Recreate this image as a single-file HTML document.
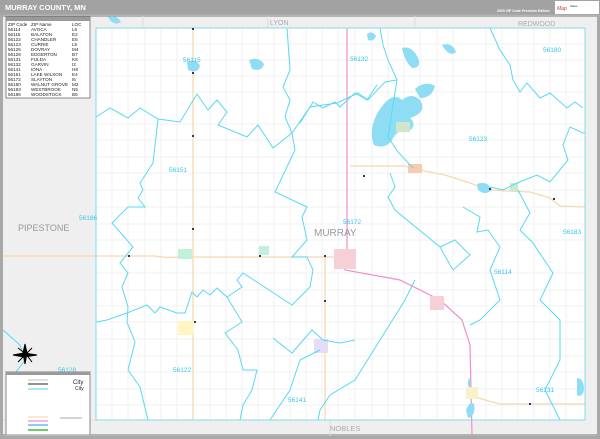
<!DOCTYPE html>
<html><head><meta charset="utf-8"><style>
body{margin:0;width:600px;height:439px;overflow:hidden;background:#fff;font-family:"Liberation Sans",sans-serif}
svg{display:block}
text{font-family:"Liberation Sans",sans-serif}
</style></head><body>
<svg width="600" height="439" viewBox="0 0 600 439" xmlns="http://www.w3.org/2000/svg">
<rect width="600" height="439" fill="#a9a9a9"/>
<rect x="0" y="0" width="600" height="14" fill="#a2a2a2"/>
<text x="5" y="10" font-size="7.5" font-weight="bold" fill="#fff">MURRAY COUNTY, MN</text>
<text x="497" y="12" font-size="3.5" font-weight="bold" fill="#fff">2020 ZIP Code Premium Edition</text>
<rect x="555" y="1" width="44" height="13" fill="#fff"/>
<text x="557" y="10" font-size="5" fill="#c33" font-style="italic">Map</text>
<text x="570" y="7" font-size="3" fill="#333">Sales</text>
<!-- map frame -->
<rect x="3" y="15" width="594" height="421" fill="#efefef"/>
<rect x="96" y="28" width="489" height="392" fill="#fff"/>
<!-- ticks -->
<g fill="#666" font-size="2">
<line x1="3" y1="16" x2="597" y2="16" stroke="#777" stroke-width="1"/>
<line x1="3" y1="435" x2="597" y2="435" stroke="#777" stroke-width="1"/>
</g>
<!-- neighbor borders -->
<g stroke="#ddd" stroke-width="1" fill="none">
<path d="M143 16V28M268 16V28M415 16V28M330 420V436M3 420H96"/>
</g>
<text x="270" y="25" font-size="7" fill="#aaa">LYON</text>
<text x="518" y="26" font-size="7" fill="#aaa">REDWOOD</text>
<text x="330" y="431" font-size="7.5" fill="#aaa">NOBLES</text>
<text x="18" y="231" font-size="9" fill="#999">PIPESTONE</text>
<!-- grid -->
<g stroke="#eeeeee" stroke-width="0.8">
<path d="M96 44H585M96 60H585M96 76H585M96 92H585M96 124H585M96 140H585M96 157H585M96 173H585M96 190H585M96 207H585M96 224H585M96 240H585M96 273H585M96 290H585M96 306H585M96 322H585M96 339H585M96 356H585M96 372H585M96 389H585M96 405H585"/>
<path d="M112 28V420M128 28V420M145 28V420M161 28V420M177 28V420M210 28V420M226 28V420M242 28V420M258 28V420M274 28V420M290 28V420M306 28V420M322 28V420M338 28V420M355 28V420M372 28V420M388 28V420M404 28V420M420 28V420M437 28V420M453 28V420M486 28V420M502 28V420M518 28V420M534 28V420M550 28V420M566 28V420"/>
</g>
<!-- roads -->
<g fill="none" stroke="#f8d8b0" stroke-width="1.3">
<path d="M193 28V420"/>
<path d="M3 256H155Q165 258 180 257H335"/>
<path d="M350 166L404 166L420 170L445 175L470 183L488 190L530 192L550 198L560 206L585 207"/>
<path d="M470 395L485 400L500 404H585"/>
<path d="M325 256V420"/>
</g>
<path d="M347 28V250L340 260L345 270L400 280L440 300L462 320L470 345L472 435" fill="none" stroke="#f08fc8" stroke-width="1.2"/>
<!-- lakes -->
<g fill="#8fdcf5">
<path d="M378 112Q392 90 402 100Q412 92 420 100Q428 112 410 118Q418 125 408 132Q398 128 392 140Q385 150 374 145Q368 130 378 112Z"/>
<path d="M402 48Q412 45 418 58Q422 68 412 68Q405 62 402 48Z"/>
<path d="M442 45Q452 42 456 52Q450 58 442 45Z"/>
<path d="M415 89Q425 80 435 86Q432 98 420 98Z"/>
<path d="M187 62Q197 58 200 66Q198 74 188 70Z"/>
<path d="M249 60Q258 56 264 64Q262 72 252 69Z"/>
<path d="M367 34Q372 30 376 36Q374 42 368 40Z"/>
<path d="M477 184Q487 180 492 190Q485 196 478 190Z"/>
<path d="M466 410Q470 400 474 404Q476 416 468 418Z"/>
<path d="M469 378Q472 382 470 388Q466 385 469 378Z"/>
<path d="M577 378Q584 378 584 390Q582 398 577 395Z"/>
<path d="M108 17Q116 14 121 22Q114 27 108 17Z"/>
</g>
<!-- towns -->
<rect x="396" y="122" width="14" height="10" fill="#cfe6cc"/>
<rect x="408" y="164" width="14" height="9" fill="#f4ccb0"/>
<rect x="510" y="183" width="8" height="8" fill="#c7ecd6"/>
<rect x="334" y="249" width="22" height="20" fill="#f5d0d6"/>
<rect x="430" y="296" width="14" height="14" fill="#f5d0d6"/>
<rect x="178" y="249" width="14" height="10" fill="#c3f0dc"/>
<rect x="259" y="246" width="10" height="9" fill="#c3f0dc"/>
<rect x="178" y="321" width="16" height="14" fill="#fff6c4"/>
<rect x="314" y="339" width="14" height="14" fill="#e5dcf7"/>
<rect x="466" y="387" width="12" height="12" fill="#f6f3c8"/>
<!-- zip boundaries -->
<g fill="none" stroke="#5ad8f2" stroke-width="1">
<path d="M96 117L110 108L128 118L140 108L158 119L180 122L197 94L208 110L217 100L227 112L218 125L247 137L258 125L273 148L292 133L310 107L337 103L358 93L368 100L385 82L397 80"/>
<path d="M287 28L290 70L283 87L290 100L285 117L292 133L295 150L275 192L307 207L302 217L307 240L292 257L307 257L313 270L310 287L292 305L243 273L237 280L242 287L227 297L217 288L210 295L203 290L197 297L192 292L185 313L177 313L160 307L155 313L147 305L127 313L107 320L96 322"/>
<path d="M158 119L153 163L140 183L143 190L138 198L145 207L128 207L112 223L133 247L120 263L128 273L122 287L128 307L127 322L135 342L128 370L140 387L148 420"/>
<path d="M227 297L242 322L225 333L238 350L243 370L257 370L252 390L243 405L240 420"/>
<path d="M273 338L292 353L312 330L323 340L340 343L355 340"/>
<path d="M415 280L405 300L355 380L330 395L320 410L318 420"/>
<path d="M380 28L383 45L388 60L397 80L388 137L398 152L413 168"/>
<path d="M300 123L313 102L323 108L335 102L340 107L355 93L367 100L377 85"/>
<path d="M390 173L395 187L388 197L395 210L440 247L455 240L470 255L453 270L440 247"/>
<path d="M463 207L480 217L477 232L488 230L500 247L490 270L500 300L480 320L470 325"/>
<path d="M490 187L503 190L517 183L537 175L550 182L568 160L563 145L570 127L583 133L585 133"/>
<path d="M513 80L520 92L527 83L540 98L550 93L567 108L575 102L583 108"/>
<path d="M518 190L530 213L520 230L533 243L553 273L540 300L560 320L560 360L545 390L560 420"/>
<path d="M270 420L290 390L300 360L320 350"/>
<path d="M490 28L500 50L510 65L513 80"/>
<path d="M3 330L20 345L25 360L10 380"/>
</g>
<!-- county border -->
<rect x="96" y="28" width="489" height="392" fill="none" stroke="#7fdcf0" stroke-width="1"/>
<!-- dots -->
<g fill="#333370">
<rect x="192" y="72" width="2" height="2"/><rect x="192" y="135" width="2" height="2"/><rect x="192" y="228" width="2" height="2"/>
<rect x="128" y="255" width="2" height="2"/><rect x="259" y="255" width="2" height="2"/><rect x="324" y="255" width="2" height="2"/>
<rect x="363" y="175" width="2" height="2"/><rect x="489" y="188" width="2" height="2"/><rect x="553" y="198" width="2" height="2"/>
<rect x="194" y="321" width="2" height="2"/><rect x="324" y="300" width="2" height="2"/><rect x="529" y="403" width="2" height="2"/>
<rect x="192" y="28" width="2" height="2"/>
</g>
<!-- zip labels -->
<g fill="#33c6ea" font-size="6.5">
<text x="183" y="62">56115</text><text x="350" y="61">56132</text><text x="543" y="52">56180</text>
<text x="469" y="141">56123</text><text x="169" y="172">56151</text><text x="79" y="220">56186</text>
<text x="343" y="224">56172</text><text x="563" y="234">56183</text><text x="494" y="274">56114</text>
<text x="173" y="372">56122</text><text x="288" y="402">56141</text><text x="536" y="392">56131</text>
<text x="58" y="372">56128</text>
</g>
<text x="314" y="236" font-size="10" fill="#999">MURRAY</text>
<!-- zip table -->
<rect x="6" y="17" width="84" height="81" fill="#fff" stroke="#888" stroke-width="1"/>
<rect x="6" y="17" width="84" height="4" fill="#9a9a9a"/>
<g font-size="4.6" fill="#222">
<text x="8" y="26">ZIP Code</text><text x="31" y="26">ZIP Name</text><text x="72" y="26">LOC</text>
<text x="8" y="31">56114</text><text x="31" y="31">AVOCA</text><text x="72" y="31">L6</text>
<text x="8" y="36">56115</text><text x="31" y="36">BALATON</text><text x="72" y="36">E2</text>
<text x="8" y="41">56122</text><text x="31" y="41">CHANDLER</text><text x="72" y="41">E6</text>
<text x="8" y="46">56123</text><text x="31" y="46">CURRIE</text><text x="72" y="46">L5</text>
<text x="8" y="51">56125</text><text x="31" y="51">DOVRAY</text><text x="72" y="51">M4</text>
<text x="8" y="56">56128</text><text x="31" y="56">EDGERTON</text><text x="72" y="56">B7</text>
<text x="8" y="61">56131</text><text x="31" y="61">FULDA</text><text x="72" y="61">K8</text>
<text x="8" y="66">56132</text><text x="31" y="66">GARVIN</text><text x="72" y="66">I2</text>
<text x="8" y="71">56141</text><text x="31" y="71">IONA</text><text x="72" y="71">H8</text>
<text x="8" y="76">56151</text><text x="31" y="76">LAKE WILSON</text><text x="72" y="76">E4</text>
<text x="8" y="81">56172</text><text x="31" y="81">SLAYTON</text><text x="72" y="81">I5</text>
<text x="8" y="86">56180</text><text x="31" y="86">WALNUT GROVE</text><text x="72" y="86">M2</text>
<text x="8" y="91">56183</text><text x="31" y="91">WESTBROOK</text><text x="72" y="91">N5</text>
<text x="8" y="96">56186</text><text x="31" y="96">WOODSTOCK</text><text x="72" y="96">B5</text>
</g>
<!-- compass -->
<g stroke="#000" stroke-width="1" fill="#000">
<path d="M25 344L27 353L25 364L23 353Z"/><path d="M13 355L24 353L37 355L24 357Z"/>
<path d="M18 348L26 354L32 362M32 348L18 362" fill="none"/>
</g>
<!-- legend box -->
<rect x="6" y="372" width="84" height="63" fill="#fff" stroke="#888"/>
<rect x="6" y="372" width="84" height="3" fill="#9a9a9a"/>
<g stroke-width="1.2">
<line x1="28" y1="380" x2="48" y2="380" stroke="#ccc"/>
<line x1="28" y1="384" x2="48" y2="384" stroke="#555"/>
<line x1="28" y1="389" x2="48" y2="389" stroke="#a8e8f5" stroke-width="2"/>
<line x1="28" y1="417" x2="48" y2="417" stroke="#fad9b0"/>
<line x1="28" y1="421" x2="48" y2="421" stroke="#f08fc8"/>
<line x1="28" y1="425" x2="48" y2="425" stroke="#4ab0e8"/>
<line x1="28" y1="430" x2="48" y2="430" stroke="#6ccf6c" stroke-width="2"/>
<line x1="60" y1="418" x2="82" y2="418" stroke="#555" stroke-width="0.6"/>
</g>
<text x="73" y="384" font-size="6" fill="#222">City</text>
<text x="75" y="390" font-size="5" fill="#222">City</text>
</svg>
</body></html>
